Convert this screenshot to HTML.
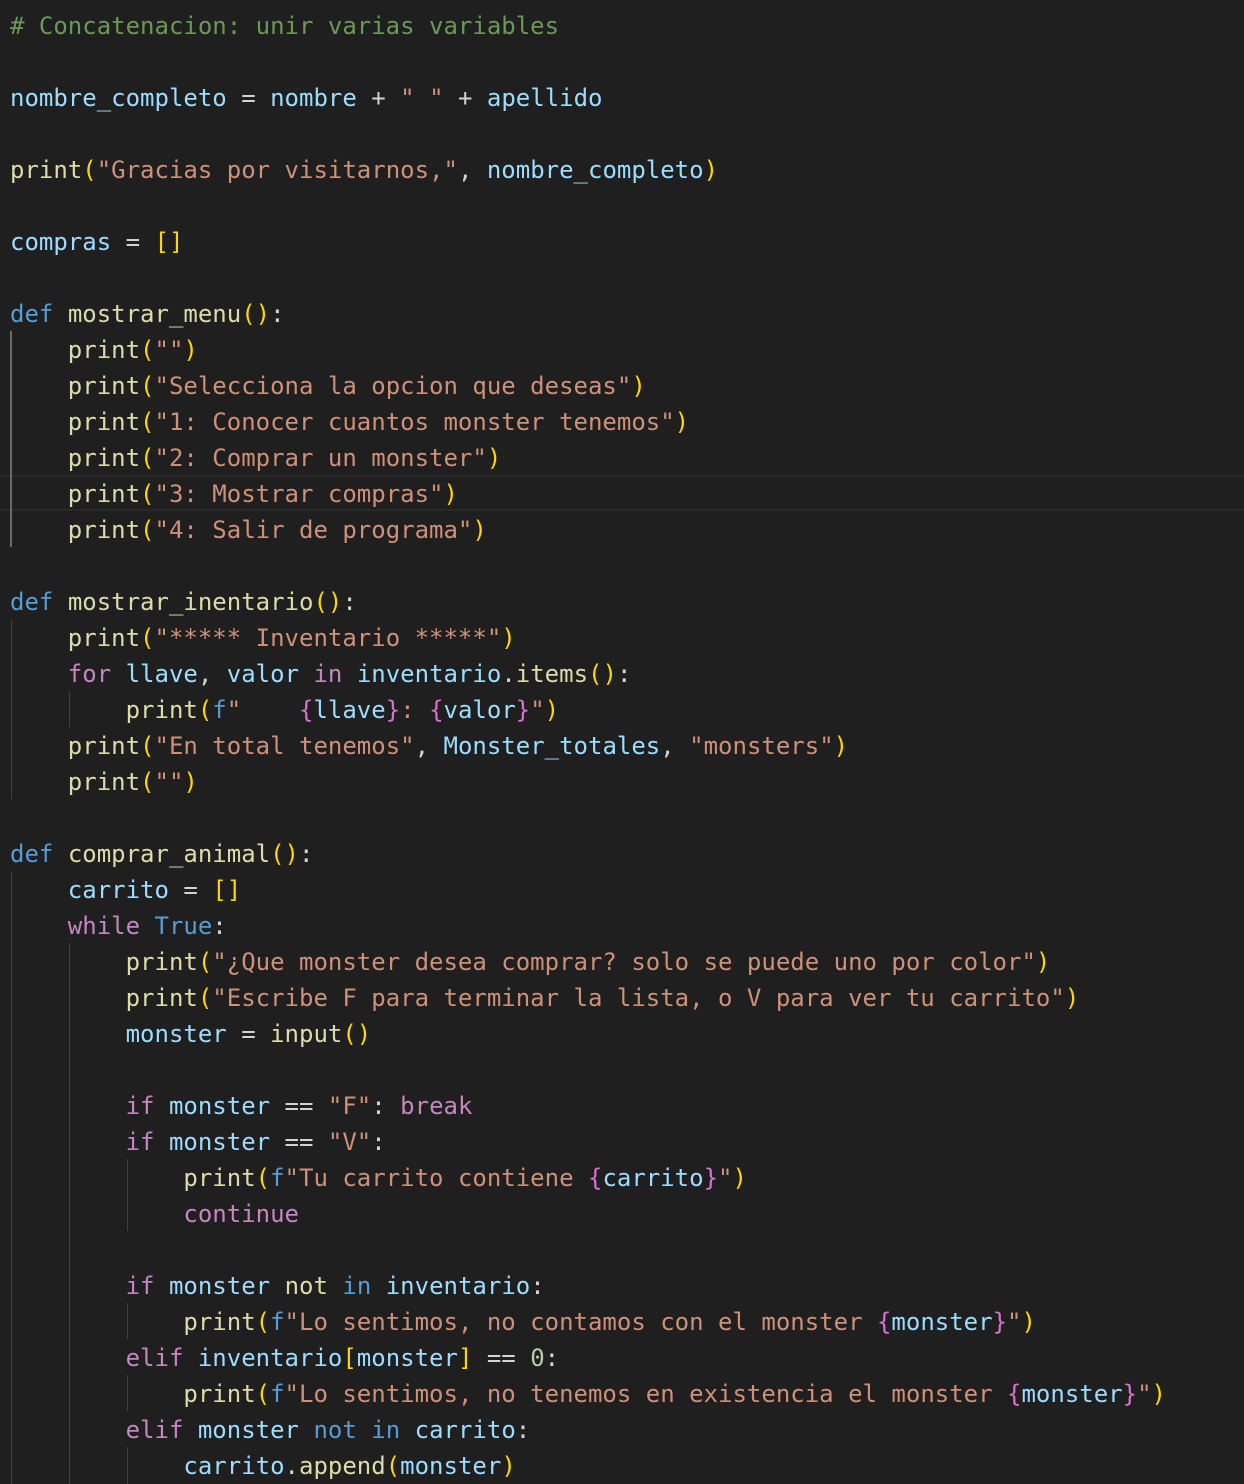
<!DOCTYPE html>
<html><head><meta charset="utf-8"><style>
html,body{margin:0;padding:0;background:#1f1f1f;width:1244px;height:1484px;overflow:hidden;position:relative}
pre{position:absolute;left:10px;top:8px;margin:0;font-family:"DejaVu Sans Mono","Liberation Mono",monospace;font-size:24px;line-height:36px;color:#d4d4d4;white-space:pre}
.c{color:#6a9955}.k{color:#569cd6}.f{color:#dcdcaa}.v{color:#9cdcfe}.s{color:#ce9178}.b{color:#ffd700}.p{color:#c586c0}.q{color:#da70d6}.n{color:#b5cea8}
.g{position:absolute;width:1px;background:#404040}
.cur{position:absolute;left:0;width:1244px;top:475px;height:32px;border-top:2px solid #282828;border-bottom:2px solid #282828}
</style></head><body>
<div class="cur"></div>
<div class="g" style="left:10px;width:2px;background:#6a6a6a;top:331px;height:216px"></div>
<div class="g" style="left:11px;top:619px;height:180px"></div>
<div class="g" style="left:11px;top:871px;height:613px"></div>
<div class="g" style="left:69px;top:691px;height:36px"></div>
<div class="g" style="left:69px;top:943px;height:541px"></div>
<div class="g" style="left:127px;top:1159px;height:72px"></div>
<div class="g" style="left:127px;top:1303px;height:36px"></div>
<div class="g" style="left:127px;top:1375px;height:36px"></div>
<div class="g" style="left:127px;top:1447px;height:37px"></div>
<pre><span class="c"># Concatenacion: unir varias variables</span>

<span class="v">nombre_completo</span> = <span class="v">nombre</span> + <span class="s">" "</span> + <span class="v">apellido</span>

<span class="f">print</span><span class="b">(</span><span class="s">"Gracias por visitarnos,"</span>, <span class="v">nombre_completo</span><span class="b">)</span>

<span class="v">compras</span> = <span class="b">[]</span>

<span class="k">def</span> <span class="f">mostrar_menu</span><span class="b">()</span>:
    <span class="f">print</span><span class="b">(</span><span class="s">""</span><span class="b">)</span>
    <span class="f">print</span><span class="b">(</span><span class="s">"Selecciona la opcion que deseas"</span><span class="b">)</span>
    <span class="f">print</span><span class="b">(</span><span class="s">"1: Conocer cuantos monster tenemos"</span><span class="b">)</span>
    <span class="f">print</span><span class="b">(</span><span class="s">"2: Comprar un monster"</span><span class="b">)</span>
    <span class="f">print</span><span class="b">(</span><span class="s">"3: Mostrar compras"</span><span class="b">)</span>
    <span class="f">print</span><span class="b">(</span><span class="s">"4: Salir de programa"</span><span class="b">)</span>

<span class="k">def</span> <span class="f">mostrar_inentario</span><span class="b">()</span>:
    <span class="f">print</span><span class="b">(</span><span class="s">"***** Inventario *****"</span><span class="b">)</span>
    <span class="p">for</span> <span class="v">llave</span>, <span class="v">valor</span> <span class="p">in</span> <span class="v">inventario</span>.<span class="f">items</span><span class="b">()</span>:
        <span class="f">print</span><span class="b">(</span><span class="k">f</span><span class="s">"    </span><span class="q">{</span><span class="v">llave</span><span class="q">}</span><span class="s">: </span><span class="q">{</span><span class="v">valor</span><span class="q">}</span><span class="s">"</span><span class="b">)</span>
    <span class="f">print</span><span class="b">(</span><span class="s">"En total tenemos"</span>, <span class="v">Monster_totales</span>, <span class="s">"monsters"</span><span class="b">)</span>
    <span class="f">print</span><span class="b">(</span><span class="s">""</span><span class="b">)</span>

<span class="k">def</span> <span class="f">comprar_animal</span><span class="b">()</span>:
    <span class="v">carrito</span> = <span class="b">[]</span>
    <span class="p">while</span> <span class="k">True</span>:
        <span class="f">print</span><span class="b">(</span><span class="s">"¿Que monster desea comprar? solo se puede uno por color"</span><span class="b">)</span>
        <span class="f">print</span><span class="b">(</span><span class="s">"Escribe F para terminar la lista, o V para ver tu carrito"</span><span class="b">)</span>
        <span class="v">monster</span> = <span class="f">input</span><span class="b">()</span>

        <span class="p">if</span> <span class="v">monster</span> == <span class="s">"F"</span>: <span class="p">break</span>
        <span class="p">if</span> <span class="v">monster</span> == <span class="s">"V"</span>:
            <span class="f">print</span><span class="b">(</span><span class="k">f</span><span class="s">"Tu carrito contiene </span><span class="q">{</span><span class="v">carrito</span><span class="q">}</span><span class="s">"</span><span class="b">)</span>
            <span class="p">continue</span>

        <span class="p">if</span> <span class="v">monster</span> <span class="f">not</span> <span class="k">in</span> <span class="v">inventario</span>:
            <span class="f">print</span><span class="b">(</span><span class="k">f</span><span class="s">"Lo sentimos, no contamos con el monster </span><span class="q">{</span><span class="v">monster</span><span class="q">}</span><span class="s">"</span><span class="b">)</span>
        <span class="p">elif</span> <span class="v">inventario</span><span class="b">[</span><span class="v">monster</span><span class="b">]</span> == <span class="n">0</span>:
            <span class="f">print</span><span class="b">(</span><span class="k">f</span><span class="s">"Lo sentimos, no tenemos en existencia el monster </span><span class="q">{</span><span class="v">monster</span><span class="q">}</span><span class="s">"</span><span class="b">)</span>
        <span class="p">elif</span> <span class="v">monster</span> <span class="k">not</span> <span class="k">in</span> <span class="v">carrito</span>:
            <span class="v">carrito</span>.<span class="f">append</span><span class="b">(</span><span class="v">monster</span><span class="b">)</span></pre>
</body></html>
